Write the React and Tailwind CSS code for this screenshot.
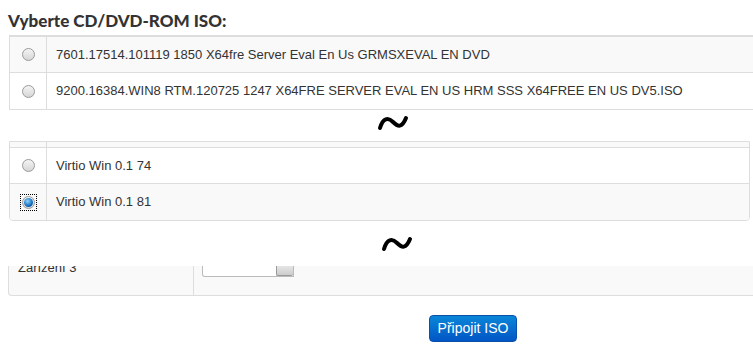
import React from "react";

const Radio = ({ checked }) => (
  <span className="relative inline-block w-[13px] h-[13px]">
    {checked && (
      <span className="absolute -inset-[2px] border border-dotted border-black" />
    )}
    <span
      className="absolute inset-0 rounded-full border border-[#9a9a9a]"
      style={{ background: "linear-gradient(#f4f4f4, #d6d6d6)" }}
    />
    {checked && (
      <span
        className="absolute inset-[2px] rounded-full"
        style={{ background: "radial-gradient(circle at 40% 35%, #8fd6ff, #0a63b8 65%, #0b3d7a)" }}
      />
    )}
  </span>
);

const Row = ({ text, bg, checked, last }) => (
  <div className={`flex h-[36px] ${bg} ${last ? "" : "border-b border-[#dddddd]"}`}>
    <div className="w-[37px] shrink-0 border-r border-[#dddddd] flex items-center justify-center">
      <Radio checked={checked} />
    </div>
    <div className="flex items-center pl-[9px] text-[13px] text-[#333333] whitespace-nowrap">
      {text}
    </div>
  </div>
);

const Tilde = ({ className }) => (
  <svg width="32" height="16" viewBox="0 0 32 16" className={className}>
    <path
      d="M3 13 C 6 3, 11 2, 16 7 S 25 13, 29 3"
      fill="none"
      stroke="#000"
      strokeWidth="4"
      strokeLinecap="round"
    />
  </svg>
);

export default function App() {
  return (
    <div
      className="w-[753px] h-[347px] overflow-hidden bg-white"
      style={{ fontFamily: '"Liberation Sans", Arial, sans-serif' }}
    >
      <div
        className="h-[35px] pt-[11px] pl-[8px] text-[17px] leading-[20px] font-black text-[#333333]"
        style={{ fontFamily: 'Lato, "Open Sans", sans-serif' }}
      >
        Vyberte CD/DVD-ROM ISO:
      </div>

      <div className="ml-[9px] border-t-2 border-l border-b border-[#dddddd]">
        <Row
          bg="bg-[#f9f9f9]"
          text="7601.17514.101119 1850 X64fre Server Eval En Us GRMSXEVAL EN DVD"
        />
        <Row
          bg="bg-white"
          last
          text="9200.16384.WIN8 RTM.120725 1247 X64FRE SERVER EVAL EN US HRM SSS X64FREE EN US DV5.ISO"
        />
      </div>

      <div className="h-[31px] flex items-start">
        <Tilde className="ml-[377px] mt-[5px]" />
      </div>

      <div className="ml-[9px] w-[741px] border-t border-l border-r border-b border-[#dddddd] rounded-bl-[4px] rounded-br-[4px] overflow-hidden">
        <div className="flex h-[6px] bg-[#f9f9f9] border-b border-[#dddddd]">
          <div className="w-[37px] border-r border-[#dddddd]" />
        </div>
        <Row bg="bg-white" text="Virtio Win 0.1 74" />
        <Row bg="bg-[#f9f9f9]" last checked text="Virtio Win 0.1 81" />
      </div>

      <div className="h-[45px] flex items-start">
        <Tilde className="ml-[381px] mt-[15px]" />
      </div>

      <div className="ml-[8px] h-[30px] flex bg-[#f9f9f9] border-l border-b border-[#dddddd] rounded-bl-[4px] overflow-hidden">
        <div className="w-[185px] shrink-0 border-r border-[#dddddd] pl-[9px]">
          <div className="-mt-[6px] text-[13px] leading-[15px] text-[#333333]">Zařízení 3</div>
        </div>
        <div className="pl-[8px]">
          <div className="flex w-[92px] h-[11px] bg-white border-l border-r border-b border-[#bbbbbb] rounded-bl-[3px]">
            <div className="flex-1" />
            <div
              className="w-[17px] h-[10px] border-l border-b border-[#999999] rounded-b-[2px]"
              style={{ background: "linear-gradient(#e6e6e6, #cccccc)" }}
            />
          </div>
        </div>
      </div>

      <div className="flex pl-[429px] pt-[19px]">
        <button
          className="w-[88px] h-[27px] rounded-[4px] border border-[#0a4fa8] text-white text-[14px] leading-[25px] text-center"
          style={{ background: "linear-gradient(#0a86d8, #0056c6)" }}
        >
          Připojit ISO
        </button>
      </div>
    </div>
  );
}
